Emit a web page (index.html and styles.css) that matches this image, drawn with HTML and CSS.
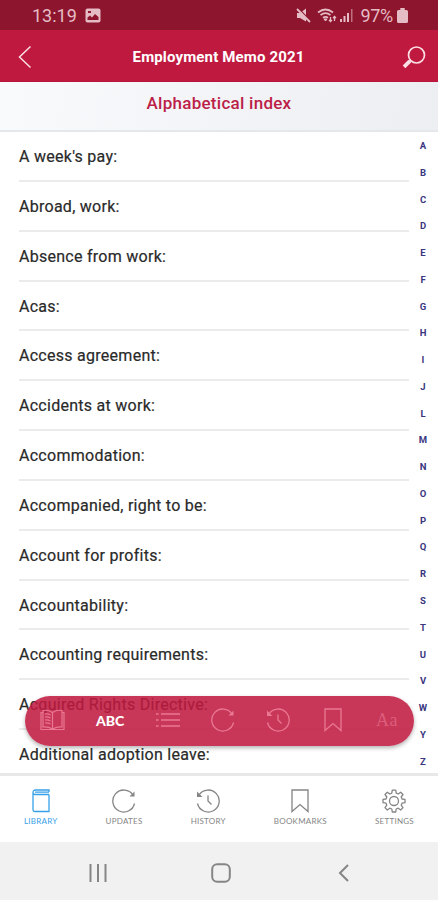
FILE: index.html
```html
<!DOCTYPE html>
<html lang="en">
<head>
	<meta charset="utf-8">
	<title>Employment Memo 2021</title>
	<link rel="stylesheet" href="styles.css">
</head>
<body>
	<div class="status">
		<span class="time">13:19</span>
		<svg class="photo" width="16" height="15" viewBox="0 0 16 15"><rect x="0.5" y="0.5" width="15" height="14" rx="2" fill="currentColor"/><path d="M2.500 12V9.500L5 7.500l2 2 3-3.500L13.500 9v3z" fill="#8d152e"/><path d="M3 3h3v2H3z" fill="#8d152e"/></svg>
		<div class="statusRight">
			<svg class="mute" width="15" height="15" viewBox="0 0 15 15"><path d="M1 5h3l6-4.500v13L4 10H1z" fill="currentColor"/><path d="M2 0L14.500 13" stroke="#8d152e" stroke-width="1.500"/><path d="M1 1L14 14" stroke="currentColor" stroke-width="1.800"/></svg>
			<svg class="wifi" width="20" height="15" viewBox="0 0 20 15" fill="none" stroke="currentColor" stroke-width="1.700"><path d="M1 4.500Q8.500-1.500 16 4.500M3.500 7.200Q8.500 3 13.500 7.200M6 9.800Q8.500 8 11 9.800"/><path d="M7 11h3l-1.500 2z" fill="currentColor" stroke-width="1"/><path d="M13.500 9v4.500M12 12l1.500 1.500L15 12M17.500 13V8.500M16 10l1.500-1.500L19 10" stroke-width="1.300"/></svg>
			<svg class="signal" width="13" height="13" viewBox="0 0 13 13" fill="currentColor"><path d="M0 10h2v3H0zM3.500 7h2v6h-2zM7 4h2v9H7z"/><path d="M11 0h1.500v13H11z" opacity=".55"/></svg>
			<span class="percent">97%</span>
			<svg class="battery" width="11" height="15" viewBox="0 0 10 15" preserveAspectRatio="none"><path d="M3 0h4v2h1.500Q10 2 10 3.500v10q0 1.500-1.500 1.500h-7Q0 15 0 13.500v-10Q0 2 1.500 2H3z" fill="currentColor"/></svg>
		</div>
	</div>
	<div class="header">
		<svg width="14" height="24" viewBox="0 0 14 24" fill="none" stroke="currentColor" stroke-width="1.500"><path d="M12.500 1.500L1.500 12l11 10.500"/></svg>
		<h1>Employment Memo 2021</h1>
		<svg width="24" height="23" viewBox="0 0 24 23" fill="none" stroke="currentColor"><circle cx="14.500" cy="9" r="8" stroke-width="1.700"/><path d="M8.800 14.200L7 16" stroke-width="2"/><path d="M7.800 15.200L2 20.800" stroke-width="3.800"/></svg>
	</div>
	<h2 class="title">Alphabetical index</h2>
	<div class="content">
		<ul class="list">
			<li>A week's pay:</li>
			<li>Abroad, work:</li>
			<li>Absence from work:</li>
			<li>Acas:</li>
			<li>Access agreement:</li>
			<li>Accidents at work:</li>
			<li>Accommodation:</li>
			<li>Accompanied, right to be:</li>
			<li>Account for profits:</li>
			<li>Accountability:</li>
			<li>Accounting requirements:</li>
			<li>Acquired Rights Directive:</li>
			<li>Additional adoption leave:</li>
		</ul>
		<ul class="letters">
			<li>A</li><li>B</li><li>C</li><li>D</li><li>E</li><li>F</li><li>G</li><li>H</li>
			<li>I</li><li>J</li><li>L</li><li>M</li><li>N</li><li>O</li><li>P</li><li>Q</li>
			<li>R</li><li>S</li><li>T</li><li>U</li><li>V</li><li>W</li><li>Y</li><li>Z</li>
		</ul>
		<div class="toolbar">
			<svg class="book" width="25" height="22" viewBox="0 0 25 22" fill="none" stroke="currentColor" stroke-width="1.200"><path d="M12.500 3.500Q8 .5 3 1.500v16.500q5-.5 9.500 2Q17 17.500 22 18V1.500q-5-1-9.500 2zV20M3 3.500H1V20.500h23V3.500h-2M5 5q3-.5 5.500 1M5 8q3-.5 5.500 1M5 11q3-.5 5.500 1M5 14q3-.5 5.500 1"/></svg>
			<span class="abc">ABC</span>
			<svg class="lines" width="24" height="16" viewBox="0 0 24 16" stroke="currentColor" stroke-width="1.300"><path d="M5 2h19M5 8h19M5 14h19M0 2h2.500M0 8h2.500M0 14h2.500"/></svg>
			<svg class="refresh" width="24" height="24" viewBox="0 0 24 24"><use href="#refresh"/></svg>
			<svg class="history" width="24" height="24" viewBox="0 0 24 24"><use href="#history"/></svg>
			<svg class="mark" width="18" height="24" viewBox="0 0 18 24"><use href="#bookmark"/></svg>
			<span class="aa">Aa</span>
		</div>
	</div>
	<div class="tabs">
		<div class="tab active">
			<svg width="18" height="24" viewBox="0 0 18 24" fill="none" stroke="currentColor" stroke-width="1.300"><path d="M17 5.500V22.500H3Q1 22.500 1 20.500V3.500Q1 1 3.500 1H17v2M1 3.500Q1 5.500 3 5.500h14M3 3.200h14"/></svg>
			<span>LIBRARY</span>
		</div>
		<div class="tab">
			<svg width="24" height="24" viewBox="0 0 24 24"><use href="#refresh"/></svg>
			<span>UPDATES</span>
		</div>
		<div class="tab">
			<svg width="24" height="24" viewBox="0 0 24 24"><use href="#history"/></svg>
			<span>HISTORY</span>
		</div>
		<div class="tab">
			<svg width="18" height="24" viewBox="0 0 18 24"><use href="#bookmark"/></svg>
			<span>BOOKMARKS</span>
		</div>
		<div class="tab">
			<svg width="24" height="24" viewBox="0 0 24 24" fill="none" stroke="currentColor" stroke-width="1.300" stroke-linejoin="round"><path d="M10.300 1.200h3.400l.5 3 2 .8 2.500-1.800 2.300 2.300L19.200 8l.8 2 3 .4v3.300l-3 .5-.8 2 1.800 2.400-2.300 2.400-2.500-1.800-2 .8-.5 3h-3.400l-.5-3-2-.8-2.500 1.800L3 18.600l1.800-2.400-.8-2-3-.5v-3.300l3-.4.8-2L3 5.500l2.300-2.300L7.800 5l2-.8z"/><circle cx="12" cy="12" r="4.500"/></svg>
			<span>SETTINGS</span>
		</div>
	</div>
	<div class="navbar">
		<svg width="18" height="18" viewBox="0 0 18 18" stroke="currentColor" stroke-width="2"><path d="M1.500 0v18M9 0v18M16.500 0v18"/></svg>
		<svg class="home" width="20" height="20" viewBox="0 0 20 20" fill="none" stroke="currentColor" stroke-width="2"><rect x="1.200" y="1.200" width="17.600" height="17.600" rx="5"/></svg>
		<svg width="11" height="18" viewBox="0 0 11 18" fill="none" stroke="currentColor" stroke-width="2"><path d="M10 1L2 9l8 8"/></svg>
	</div>

	<!-- icons used in both bars -->
	<svg class="defs" width="0" height="0">
		<defs>
			<g id="refresh" fill="none" stroke="currentColor" stroke-width="1.300"><path d="M22.500 14.500A11 11 0 1 1 21 6"/><path d="M17.500 7.500h5V2.500z" fill="currentColor" stroke="none"/></g>
			<g id="history" fill="none" stroke="currentColor" stroke-width="1.300"><path d="M1.500 14.500A11 11 0 1 0 3 6"/><path d="M1 2.500v5.500h5.500z" fill="currentColor" stroke="none"/><path d="M12 6.500V12l3.500 3.500"/></g>
			<g id="bookmark" fill="none" stroke="currentColor" stroke-width="1.300"><path d="M1 1h16v21.500l-8-7-8 7z"/></g>
		</defs>
	</svg>
</body>
</html>
```

FILE: styles.css
```css
*{
	margin: 0px;
	padding: 0px;
	box-sizing: border-box;
}
body{
	width: 438px;
	height: 900px;
	overflow: hidden;
	display: flex;
	flex-direction: column;
	font-family: Roboto, "Liberation Sans", sans-serif;
	background-color: #fff;
}
li{
	list-style-type: none;
}
svg{
	display: block;
	flex: none;
}
.defs{
	position: absolute;
}
.status{
	height: 30px;
	flex: none;
	display: flex;
	align-items: center;
	padding: 1px 30px 0 32px;
	background-color: #8d152e;
	color: #e5bcc5;
	font-size: 18px;
}
.photo{
	margin-left: 8px;
}
.statusRight{
	margin-left: auto;
	display: flex;
	align-items: center;
}
.wifi{
	margin-left: 6px;
}
.signal{
	margin-left: 3px;
}
.percent{
	margin-left: 7px;
	letter-spacing: -0.3px;
}
.battery{
	margin-left: 4px;
}
.header{
	height: 52px;
	flex: none;
	display: flex;
	align-items: center;
	justify-content: space-between;
	padding: 3px 12px 0 18px;
	background-color: #c0193f;
	border-bottom: 1px solid #b6163a;
	color: #fff;
}
.header h1{
	padding-left: 3px;
	font-size: 15px;
	font-weight: 700;
	letter-spacing: 0.15px;
}
.header svg{
	color: #fbdfe5;
}
.title{
	height: 50px;
	flex: none;
	line-height: 43px;
	text-align: center;
	font-size: 17px;
	font-weight: 500;
	letter-spacing: 0.27px;
	color: #bc1e49;
	background: linear-gradient(100deg, #f8fafc, #eceef1);
	border-bottom: 2px solid #e5e8ea;
}
.content{
	height: 641px;
	flex: none;
	position: relative;
	display: flex;
	overflow: hidden;
}
.list{
	width: 390px;
	margin-left: 19px;
}
.list li{
	height: 49.85px;
	line-height: 49px;
	border-bottom: 2px solid #ebebeb;
	font-size: 16px;
	letter-spacing: 0.27px;
	color: #2a2a2a;
	-webkit-text-stroke: 0.2px #2a2a2a;
}
.letters{
	width: 28px;
	padding-top: 1px;
	text-align: center;
	font-size: 9.5px;
	font-weight: 700;
	color: #3a3680;
}
.letters li{
	height: 26.78px;
	line-height: 26px;
}
/* floating toolbar over the list */
.toolbar{
	position: absolute;
	left: 25px;
	bottom: 27px;
	width: 389px;
	height: 50px;
	padding: 0 0 2px 15px;
	display: flex;
	align-items: center;
	border-radius: 25px;
	background-color: rgba(192,25,63,0.87);
	box-shadow: 0 2px 4px rgba(0,0,0,0.3);
	color: #ea7893;
}
.abc{
	width: 29px;
	margin-left: 31px;
	font-family: Lato, sans-serif;
	font-size: 14px;
	font-weight: 900;
	color: #fff;
}
.lines{
	margin-left: 31px;
}
.refresh{
	margin-left: 31px;
}
.history{
	margin-left: 31px;
}
.mark{
	margin-left: 34px;
}
.aa{
	margin-left: 34px;
	font-family: "Liberation Serif", serif;
	font-size: 18px;
	letter-spacing: 0.5px;
	color: #dc5c7b;
}
.tabs{
	height: 69px;
	flex: none;
	display: flex;
	justify-content: space-between;
	padding: 13px 24px 0;
	border-top: 3px solid #e8e8e8;
	color: #858585;
}
.tab{
	display: flex;
	flex-direction: column;
	align-items: center;
	font-family: Lato, sans-serif;
	font-size: 8px;
	letter-spacing: 0.25px;
	line-height: 12px;
}
.tab span{
	margin-top: 2px;
}
.active{
	color: #37a0e8;
}
.navbar{
	flex: 1;
	display: flex;
	justify-content: space-between;
	align-items: center;
	padding: 4px 89px 0;
	background-color: #f1f1f1;
	color: #858585;
}
.home{
	margin-right: 4px;
}
```
